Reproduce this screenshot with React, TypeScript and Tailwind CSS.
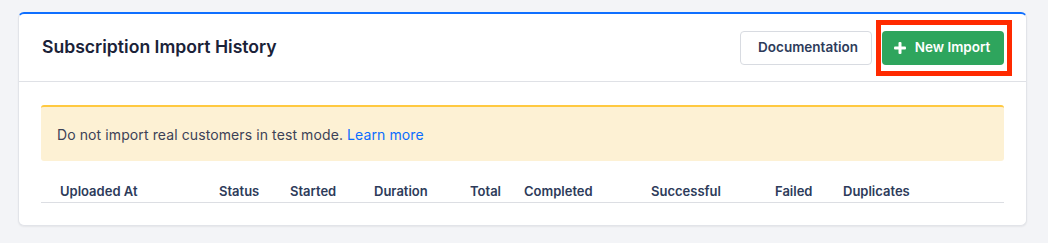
const columns = [
   { label: "Uploaded At", width: "w-[159px]" },
   { label: "Status", width: "w-[71px]" },
   { label: "Started", width: "w-[84px]" },
   { label: "Duration", width: "w-[96px]" },
   { label: "Total", width: "w-[54px]" },
   { label: "Completed", width: "w-[127px]" },
   { label: "Successful", width: "w-[124px]" },
   { label: "Failed", width: "w-[68px]" },
   { label: "Duplicates", width: "flex-1" },
];

// chunky plus glyph used on the primary button
const PlusIcon = () => (
   <svg width="12" height="12" viewBox="0 0 12 12" fill="white">
      <rect x="4.5" y="0" width="3" height="12" rx="1" />
      <rect x="0" y="4.5" width="12" height="3" rx="1" />
   </svg>
);

export default function App() {
   return (
      <div className="w-[1048px] h-[243px] bg-[#f3f4f7] pt-[12px] pl-[18px] font-['Inter',sans-serif]">
         <div className="w-[1009px] bg-white rounded-[6px] border border-[#e2e4e9] border-t-2 border-t-[#0f6fff] shadow-[0_1px_2px_rgba(0,0,0,0.06)]">
            {/* header */}
            <div className="flex items-center justify-between pl-[23px] pr-[22px] h-[68px] border-b border-[#dfe1e6]">
               <h1 className="text-[17.6px] font-semibold text-[#1a2238]">Subscription Import History</h1>
               <div className="flex items-center gap-[10px]">
                  <button className="h-[34px] w-[132px] rounded-[4px] border border-[#d8dbe1] bg-white text-[13.5px] font-semibold text-[#2d3b5a] pl-[4px]">
                     Documentation
                  </button>
                  <div className="relative">
                     <button className="h-[34px] w-[122px] rounded-[4px] bg-[#2ea55d] text-white text-[13.5px] font-semibold flex items-center justify-center gap-[9px] pr-[2px]">
                        <PlusIcon />
                        New Import
                     </button>
                     <div className="absolute left-[-6px] top-[-11px] right-[-8px] bottom-[-11px] border-[5px] border-[#ff2a00] pointer-events-none" />
                  </div>
               </div>
            </div>

            {/* body */}
            <div className="px-[22px] pt-[23px] pb-[22px]">
               <div className="h-[56px] flex items-center pl-[16px] bg-[#fdf1d4] border-t-2 border-t-[#ffc940] rounded-[3px] text-[14px] tracking-[0.1px] text-[#3c4257]">
                  Do not import real customers in test mode.&nbsp;
                  <a className="text-[#0a6cff]" href="#">Learn more</a>
               </div>

               <div className="flex items-end h-[42px] pb-[1px] border-b border-[#dcdee3]">
                  {columns.map((c) => (
                     <div key={c.label} className={`${c.width} pl-[19px] text-[13px] font-semibold text-[#2d3b5a]`}>
                        {c.label}
                     </div>
                  ))}
               </div>
            </div>
         </div>
      </div>
   );
}
